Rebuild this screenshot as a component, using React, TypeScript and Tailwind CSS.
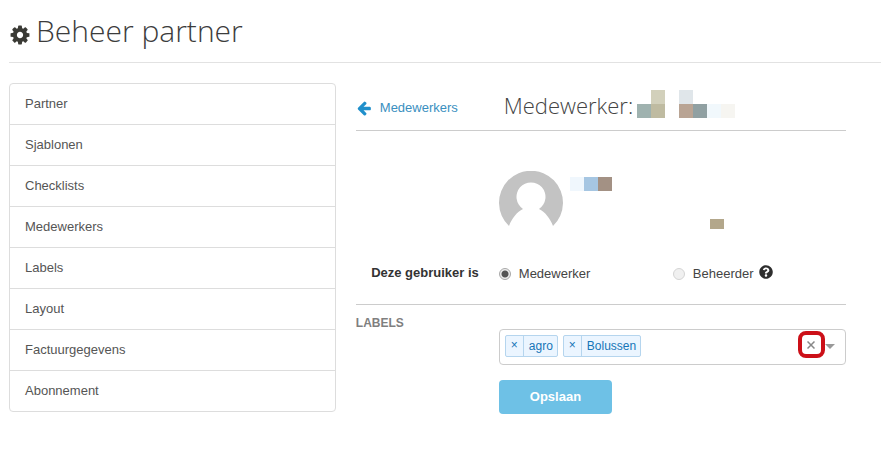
import { useState } from "react";
import { FaQuestionCircle } from "react-icons/fa";

const MENU = [
  "Partner",
  "Sjablonen",
  "Checklists",
  "Medewerkers",
  "Labels",
  "Layout",
  "Factuurgegevens",
  "Abonnement",
];

// masked last and first name, one colour per block
const NAME_BLOCKS = [
  "bg-transparent",
  "bg-[#d2d0bb]",
  "bg-transparent",
  "bg-[#e0e6ea]",
  "bg-transparent",
  "bg-transparent",
  "bg-transparent",
  "bg-[#9fb2af]",
  "bg-[#bfbba1]",
  "bg-transparent",
  "bg-[#b9a494]",
  "bg-[#90a0a2]",
  "bg-[#f1f8fc]",
  "bg-[#f6f5f1]",
];

function CogIcon() {
  return (
    <svg viewBox="0 0 1792 1792" className="size-[22px] fill-[#3a3a35]" aria-hidden="true">
      <path d="M1152 896q0-106-75-181t-181-75-181 75-75 181 75 181 181 75 181-75 75-181zm512-109v222q0 12-8 23t-20 13l-185 28q-19 54-39 91 35 50 107 138 10 12 10 25t-9 23q-27 37-99 108t-94 71q-12 0-26-9l-138-108q-44 23-91 38-16 136-29 186-7 28-36 28h-222q-14 0-24.5-8.500t-11.500-21.500l-28-184q-49-16-90-37l-141 107q-10 9-25 9-14 0-25-11-126-114-165-168-7-10-7-23 0-12 8-23 15-21 51-66.500t54-70.500q-27-50-41-99l-183-27q-13-2-21-12.500t-8-23.500v-222q0-12 8-23t19-13l186-28q14-46 39-92-40-57-107-138-10-12-10-24 0-10 9-23 26-36 98.500-107.500t94.500-71.500q13 0 26 10l138 107q44-23 91-38 16-136 29-186 7-28 36-28h222q14 0 24.500 8.500t11.500 21.500l28 184q49 16 90 37l142-107q9-9 24-9 13 0 25 10 129 119 165 170 7 8 7 22 0 12-8 23-15 21-51 66.500t-54 70.500q26 50 41 98l183 28q13 2 21 12.500t8 23.500z" />
    </svg>
  );
}

function ArrowLeftIcon() {
  return (
    <svg viewBox="0 0 1792 1792" className="size-4 fill-[#1f8fcb]" aria-hidden="true">
      <path d="M1664 896v128q0 53-32.500 90.500t-84.500 37.500h-704l293 294q38 36 38 90t-38 90l-75 76q-37 37-90 37-52 0-91-37l-651-652q-37-37-37-90 0-52 37-91l651-650q38-38 91-38 52 0 90 38l75 74q38 38 38 91t-38 91l-293 293h704q52 0 84.500 37.500t32.500 90.500z" />
    </svg>
  );
}

function Avatar() {
  return (
    <svg viewBox="0 0 64 64" className="size-16" aria-hidden="true">
      <path
        className="fill-[#c3c3c3]"
        d="M10 55A32 32 0 1 1 54 55C51 47 46 41 40 38A14.500 14.500 0 1 0 24 38C18 41 13 47 10 55Z"
      />
    </svg>
  );
}

function Tag({ name, onRemove }: { name: string; onRemove: () => void }) {
  return (
    <span className="flex h-[22px] items-stretch rounded-xs border border-[#b5d5ee] bg-[#ebf5ff] text-xs text-[#1675b8]">
      <button
        type="button"
        aria-label={`Verwijder ${name}`}
        onClick={onRemove}
        className="flex w-[18px] items-center justify-center border-r border-[#b5d5ee] pb-[2px]"
      >
        ×
      </button>
      <span className="pr-1 pl-[5px] leading-5">{name}</span>
    </span>
  );
}

type RoleProps = {
  label: string;
  checked: boolean;
  onChange: () => void;
};

function RoleOption({ label, checked, onChange }: RoleProps) {
  return (
    <label className="flex items-center gap-2 pt-[3px]">
      <input
        type="radio"
        name="role"
        checked={checked}
        onChange={onChange}
        className="size-3 appearance-none rounded-full border border-[#d4d4d4] bg-[#f0f0f0] checked:border-[#a8a8a8] checked:bg-[radial-gradient(circle,#555_0_3px,#eee_4px)]"
      />
      {label}
    </label>
  );
}

export default function App() {
  const [role, setRole] = useState("Medewerker");
  const [labels, setLabels] = useState(["agro", "Bolussen"]);

  return (
    <div className="bg-white pl-[9px] font-['Liberation_Sans',Arial,sans-serif] text-[13px] text-[#444]">
      <header className="flex h-[63px] items-center gap-[5px] border-b border-[#e2e2e2]">
        <span className="pt-2">
          <CogIcon />
        </span>
        <h1 className="pb-[2px] font-['Open_Sans',sans-serif] text-[30px] font-light text-[#3c3c3c]">
          Beheer partner
        </h1>
      </header>

      <div className="grid grid-cols-[2fr_3fr] items-start gap-5 pt-5 pr-[35px]">
        <nav className="divide-y divide-[#ddd] rounded border border-[#ddd]">
          {MENU.map((item) => (
            <a key={item} href="#" className="block px-[15px] py-[10px] leading-5 text-[#555]">
              {item}
            </a>
          ))}
        </nav>

        <main>
          <div className="flex h-12 items-center border-b border-[#ccc]">
            <a href="#" className="flex w-[148px] items-center gap-2 pt-[2px] text-[#3a8fc0]">
              <ArrowLeftIcon />
              Medewerkers
            </a>
            <h2 className="pb-1 font-['Open_Sans',sans-serif] text-[22px] leading-7 font-light">
              Medewerker:
            </h2>
            <div className="ml-1 grid grid-cols-7 pb-[6px]" aria-hidden="true">
              {NAME_BLOCKS.map((color, i) => (
                <span key={i} className={`size-[14px] ${color}`} />
              ))}
            </div>
          </div>

          {/* profiel */}
          <div className="flex gap-[7px] pt-10 pl-[143px]">
            <Avatar />
            <div className="pt-[6px]" aria-hidden="true">
              <div className="flex">
                <span className="size-[14px] bg-[#f0f7fd]" />
                <span className="size-[14px] bg-[#a6c6e2]" />
                <span className="size-[14px] bg-[#a39184]" />
              </div>
              <div className="mt-7 ml-[140px] h-[10px] w-[14px] bg-[#b3a78b]" />
            </div>
          </div>

          <div
            role="radiogroup"
            aria-labelledby="role-label"
            className="flex items-center border-b border-[#ccc] pt-[26px] pb-5"
          >
            <span id="role-label" className="w-[143px] pr-5 text-right font-bold text-[#333]">
              Deze gebruiker is
            </span>
            <div className="w-[174px]">
              <RoleOption
                label="Medewerker"
                checked={role === "Medewerker"}
                onChange={() => setRole("Medewerker")}
              />
            </div>
            <RoleOption
              label="Beheerder"
              checked={role === "Beheerder"}
              onChange={() => setRole("Beheerder")}
            />
            <FaQuestionCircle className="ml-[5px] size-[14px] text-[#2e2e2e]" />
          </div>

          <div className="flex">
            <h3 className="w-[143px] pt-[10px] text-xs font-bold text-[#7f7f7f]">LABELS</h3>
            <div className="flex-1 pt-6">
              <div className="flex h-9 items-center rounded border border-[#ccc] pr-[10px] pl-[5px]">
                <div className="flex flex-1 gap-[5px] pb-[2px]">
                  {labels.map((name) => (
                    <Tag
                      key={name}
                      name={name}
                      onRemove={() => setLabels(labels.filter((l) => l !== name))}
                    />
                  ))}
                </div>
                <button
                  type="button"
                  aria-label="Alles wissen"
                  onClick={() => setLabels([])}
                  className="mb-1 flex h-[27px] w-[27px] items-center justify-center rounded-lg border-4 border-[#cc1018]"
                >
                  <svg viewBox="0 0 8 8" className="size-2 stroke-[#888]" aria-hidden="true">
                    <path d="M0.500 0.500 7.500 7.500M7.500 0.500 0.500 7.500" strokeWidth="1.500" />
                  </svg>
                </button>
                <svg viewBox="0 0 10 5" className="h-[5px] w-[10px] fill-[#999]" aria-hidden="true">
                  <path d="M0 0h10L5 5z" />
                </svg>
              </div>
              <button
                type="submit"
                className="mt-[15px] h-[34px] rounded bg-[#6ec1e6] px-[31px] font-bold text-white"
              >
                Opslaan
              </button>
            </div>
          </div>
        </main>
      </div>
    </div>
  );
}
